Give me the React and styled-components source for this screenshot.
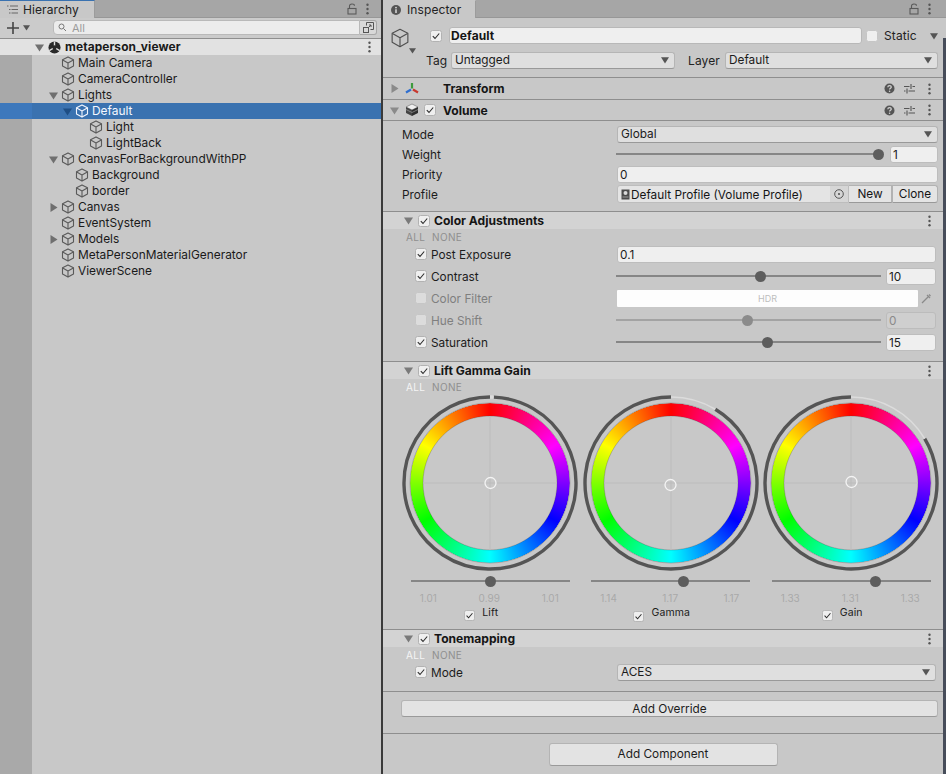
import React from "react";
import styled, { createGlobalStyle } from "styled-components";

const Global = createGlobalStyle`
  html, body { margin: 0; padding: 0; background: #c8c8c8; }
  body { font-family: Inter, "Liberation Sans", sans-serif; font-size: 11.8px; color: #151515; overflow: hidden; }
  * { box-sizing: border-box; }
`;

const Page = styled.div`
  width: 946px; height: 774px; display: flex; overflow: hidden; background: #c8c8c8;
`;
const HierarchyPanel = styled.section`
  width: 381px; height: 100%; display: flex; flex-direction: column; flex: none;
`;
const Divider = styled.div`
  width: 2px; flex: none; background: #3a3a3a;
`;
const InspectorPanel = styled.section`
  position: relative; flex: 1; min-width: 0; height: 100%; display: flex; flex-direction: column;
`;
const ScrollEdge = styled.div`
  position: absolute; right: 0; top: 38px; bottom: 0; width: 3px; background: #474d5a;
`;
const TabBar = styled.div`
  height: 18px; flex: none; background: #a6a6a6; display: flex; align-items: center; justify-content: space-between;
  border-bottom: 1px solid #979797;
`;
const Tab = styled.div`
  width: ${p => p.$width}px; height: 18px; margin-top: 1px; background: #c8c8c8; display: flex; align-items: center;
  padding-left: ${p => p.$pad}px; gap: ${p => p.$gap}px; font-size: 12px; color: #222; letter-spacing: .1px;
  border-top: 1px solid ${p => p.$accent ? "#3a72b0" : "#c8c8c8"};
  border-right: 1px solid #9c9c9c;
`;
const TabTools = styled.div`
  display: flex; align-items: center; gap: 9px; padding-right: ${p => p.$right}px; color: #555;
`;
const Toolbar = styled.div`
  height: 21px; flex: none; display: flex; align-items: center; background: #cbcbcb; border-bottom: 1px solid #8f8f8f; padding: 0 4px 1px 7px;
`;
const ToolbarAdd = styled.div`
  width: 46px; flex: none; display: flex; align-items: center; gap: 4px;
`;
const SearchField = styled.div`
  flex: 1; height: 15px; background: #ececec; border: 1px solid #b9b9b9; border-radius: 4px 0 0 4px; display: flex; align-items: center;
  padding-left: 4px; gap: 5px; color: #9b9b9b; font-size: 11px;
`;
const SearchButton = styled.div`
  width: 17px; height: 15px; background: #d8d8d8; border: 1px solid #a8a8a8; border-left: none; border-radius: 0 3px 3px 0;
  display: flex; align-items: center; justify-content: center;
`;
const Tree = styled.div`
  flex: 1; background: linear-gradient(90deg, #a9a9a9 32px, #c8c8c8 32px);
`;
const TreeRow = styled.div`
  height: 16px; display: flex; align-items: center; padding-left: ${p => 33 + p.$depth * 14}px;
  background: ${p => p.$selected ? "linear-gradient(90deg, #3d78bc 32px, #3a72b0 32px)" : p.$root ? "#e2e2e2" : "transparent"};
  color: ${p => p.$selected ? "#f4f8ff" : "#1a1a1a"};
  font-weight: ${p => p.$root ? 700 : 400};
  font-size: 11.9px;
  letter-spacing: ${p => p.$root ? "0.1px" : "0"};
`;
const ArrowSlot = styled.span`
  width: 14px; height: 16px; flex: none; display: flex; align-items: center; justify-content: center; padding-right: 2px;
`;
const RootMark = styled.span`
  display: flex; margin: 0 1px;
`;
const TreeLabel = styled.span`
  margin-left: 3px; padding-bottom: 2px; flex: 1; white-space: nowrap;
`;
const RowMenu = styled.span`
  display: flex; padding-right: 10px;
`;

const ObjectHeader = styled.div`
  height: 60px; flex: none; display: flex; border-bottom: 1px solid #8e8e8e; padding: 9px 8px 0 7px;
`;
const ObjectIcon = styled.div`
  width: 27px; flex: none; position: relative; height: 26px; margin-top: 1px;
`;
const ObjectMenuArrow = styled.span`
  position: absolute; right: 1px; bottom: 0; display: flex;
`;
const ObjectFields = styled.div`
  flex: 1; min-width: 0; display: flex; flex-direction: column; gap: 8px;
`;
const ObjectRow = styled.div`
  display: flex; align-items: center; height: 17px;
`;
const ObjectCheck = styled.span`
  display: flex; margin-left: 13px;
`;
const NameField = styled.div`
  flex: none; width: 413px; margin-left: 7px; height: 17px; background: #efefef; border: 1px solid #b8b8b8; border-radius: 3px;
  font-weight: 700; display: flex; align-items: center; padding-left: 1px; letter-spacing: .1px; font-size: 12px;
`;
const StaticGroup = styled.div`
  display: flex; align-items: center; margin-left: 4px; flex: 1; font-size: 12px; color: #222;
`;
const StaticText = styled.span`
  margin-left: 6px; flex: 1; letter-spacing: .1px;
`;
const InlineLabel = styled.span`
  width: ${p => p.$width}px; flex: none; margin-left: ${p => p.$left || 0}px; font-size: 12px; color: #222; letter-spacing: .1px;
`;
const Dropdown = styled.div`
  flex: ${p => p.$width ? `0 0 ${p.$width}px` : 1}; height: 17px; background: #dfdfdf; border: 1px solid #b5b5b5; border-bottom-color: #999;
  border-radius: 3px; display: flex; align-items: center; justify-content: space-between;
  padding: 0 5px ${p => p.$lift ? 2 : 0}px 3px; color: #1c1c1c;
`;

const ComponentHeader = styled.div`
  height: ${p => p.$height}px; flex: none; display: flex; align-items: center; border-bottom: 1px solid #8e8e8e; padding: 0 15px 0 7px;
  font-weight: 700; font-size: 12.1px;
`;
const HeaderIcon = styled.span`
  display: flex; margin-left: 6px; width: 14px; flex: none;
`;
const CheckSlot = styled.span`
  display: flex; width: 12px; margin: 0 7px 0 5px; flex: none;
`;
const HeaderLabel = styled.span`
  flex: 1;
`;
const HeaderTools = styled.span`
  display: flex; align-items: center; gap: 9px;
`;
const ToolMenu = styled.span`
  display: flex; margin-left: 4px;
`;

const VolumeBody = styled.div`
  height: 91px; flex: none; padding-top: 3px; border-bottom: 1px solid #8e8e8e;
`;
const PropRow = styled.div`
  height: ${p => p.$height}px; display: grid; grid-template-columns: 234px 1fr; align-items: center; padding-right: ${p => p.$right}px;
`;
const PropLabel = styled.div`
  display: flex; align-items: center; gap: 4px; padding-left: ${p => p.$left}px;
  color: ${p => p.$off ? "#7f7f7f" : "#1c1c1c"};
`;
const PropText = styled.span`
  padding-top: 2px;
`;
const ControlRow = styled.div`
  display: flex; align-items: center; min-width: 0; gap: ${p => p.$gap || 0}px;
`;
const TextField = styled.div`
  flex: ${p => p.$width ? `0 0 ${p.$width}px` : 1}; height: 17px; background: ${p => p.$off ? "#cfcfcf" : "#efefef"};
  border: 1px solid ${p => p.$off ? "#bcbcbc" : "#bdbdbd"}; border-radius: 3px; display: flex; align-items: center; padding: 1px 0 0 2px;
  color: ${p => p.$off ? "#8a8a8a" : "#1c1c1c"};
`;
const Track = styled.div`
  position: relative; flex: 1; height: 2px; margin-left: -1px; background: ${p => p.$off ? "#a3a3a3" : "#868686"};
`;
const Thumb = styled.span`
  position: absolute; top: 1px; width: 11px; height: 11px; margin: -5.5px 0 0 -5.5px; border-radius: 50%;
  background: ${p => p.$off ? "#8b8b8b" : "#5d5d5d"};
`;
const ObjectField = styled.div`
  flex: 1; height: 18px; background: #e4e4e4; border: 1px solid #bdbdbd; border-radius: 3px 0 0 3px; display: flex; align-items: center;
  gap: 1px; padding-left: 3px; overflow: hidden; white-space: nowrap;
`;
const ObjectName = styled.span`
  flex: 1; padding-top: 1px;
`;
const PickerCell = styled.span`
  width: 18px; height: 16px; flex: none; background: #d6d6d6; display: flex; align-items: center; justify-content: center;
`;
const MiniButton = styled.div`
  flex: 0 0 ${p => p.$width}px; height: 18px; background: #e4e4e4; border: 1px solid #b2b2b2; border-bottom-color: #999;
  border-left: ${p => p.$joined ? "1px solid #b2b2b2" : "none"};
  border-radius: ${p => p.$round ? "0 3px 3px 0" : "0"}; display: flex; align-items: center; justify-content: center; padding-bottom: 1px;
`;
const ColorField = styled.div`
  flex: 0 0 301px; height: 17px; background: #fdfdfd; color: #bdbdbd; font-size: 9px; display: flex; align-items: center; justify-content: center; border-radius: 1px;
`;
const PickerIcon = styled.span`
  flex: 1; display: flex; justify-content: flex-end; padding-right: 3px;
`;

const Section = styled.div`
  flex: none; border-bottom: 1px solid #8e8e8e; height: ${p => p.$height}px;
`;
const SectionHeader = styled.div`
  height: 17px; background: #d3d3d3; display: flex; align-items: center; padding: 0 15px 0 21px; font-weight: 700; font-size: 12.1px;
`;
const SectionCheck = styled.span`
  display: flex; margin: 0 4px 0 5px;
`;
const AllNone = styled.div`
  height: 14px; padding: 1px 0 0 23px; display: flex; gap: 7px; align-items: center; font-size: 10px; letter-spacing: .3px;
`;
const AllNoneWord = styled.span`
  color: ${p => p.$on ? "#f5f5f5" : "#8f8f8f"};
`;
const WheelGrid = styled.div`
  display: grid; grid-template-columns: repeat(3, 180.5px); padding: 2px 0 0 17px;
`;
const WheelColumn = styled.div`
  display: flex; flex-direction: column; align-items: center;
`;
const Wheel = styled.div`
  position: relative; width: 176px; height: 176px;
`;
const HueRing = styled.div`
  position: absolute; inset: 8px; border-radius: 50%;
  background: conic-gradient(#f00, #f0f 60deg, #00f 120deg, #0ff 180deg, #0f0 240deg, #ff0 300deg, #f00);
  -webkit-mask: radial-gradient(circle closest-side, transparent 66.6px, #000 67.4px, #000 79.4px, transparent 80px);
  mask: radial-gradient(circle closest-side, transparent 66.6px, #000 67.4px, #000 79.4px, transparent 80px);
`;
const WheelOverlay = styled.svg`
  position: absolute; inset: 0; width: 176px; height: 176px;
`;
const WheelSlider = styled.div`
  width: 159px; height: 20px; padding-left: 1px; display: flex; align-items: center;
`;
const WheelValues = styled.div`
  width: 159px; height: 14px; padding: 0 11px 0 9px; display: flex; justify-content: space-between; align-items: center;
  color: #a9a9a9; font-size: 10px;
`;
const WheelLabel = styled.div`
  width: 100%; display: grid; grid-template-columns: 1fr auto 1fr; gap: 7px; margin-top: 1px; align-items: start; font-size: 10.5px; color: #1c1c1c; letter-spacing: .1px;
`;
const WheelCheck = styled.span`
  justify-self: end; display: flex; margin-top: ${p => p.$drop}px;
`;
const OverrideBar = styled.div`
  flex: none; height: 42px; padding: 8px 8px 0 18px; border-bottom: 1px solid #8e8e8e;
`;
const WideButton = styled.div`
  height: ${p => p.$height}px; width: ${p => p.$width ? `${p.$width}px` : "100%"}; background: #e3e3e3; border: 1px solid #b4b4b4; border-bottom-color: #9a9a9a;
  border-radius: 3px; display: flex; align-items: center; justify-content: center; padding-bottom: ${p => p.$lift ? 1 : 0}px; color: #1c1c1c;
`;
const Footer = styled.div`
  flex: 1; display: flex; justify-content: center; padding: 9px 3px 0 0;
`;

const Tri = ({ dir = "down", color = "#6f6f6f", size = 9 }) => (
  <svg width={size} height={size} viewBox="0 0 9 9" style={{ flex: "none", display: "block" }}>
    <path d={dir === "down" ? "M0 1.5h9L4.5 8.5z" : "M1.5 0v9l7-4.5z"} fill={color} />
  </svg>
);
const Cube = ({ color = "#5a5a5a", size = 14, sw = 1.1 }) => (
  <svg width={size} height={size} viewBox="0 0 14 14" fill="none" stroke={color} strokeWidth={sw} strokeLinejoin="round" style={{ flex: "none", display: "block" }}>
    <path d="M7 .9l5.5 2.8v6.3L7 13.1 1.5 10V3.7z" />
    <path d="M1.7 3.9L7 6.9l5.3-3M7 6.9v6" />
  </svg>
);
const Dots = ({ color = "#555" }) => (
  <svg width="3" height="12" viewBox="0 0 3 12" style={{ display: "block" }}>
    <circle cx="1.5" cy="1.8" r="1.2" fill={color} /><circle cx="1.5" cy="6" r="1.2" fill={color} /><circle cx="1.5" cy="10.2" r="1.2" fill={color} />
  </svg>
);
const Lock = () => (
  <svg width="10" height="12" viewBox="0 0 10 12" fill="none" stroke="#5a5a5a" strokeWidth="1.1" style={{ display: "block" }}>
    <rect x="1" y="5.5" width="8" height="5.5" />
    <path d="M2.5 5.5V3.2C2.5 1.8 3.5 1 5 1s2.5.8 2.5 1.8" />
  </svg>
);
const Help = () => (
  <svg width="11" height="11" viewBox="0 0 11 11" style={{ display: "block" }}>
    <circle cx="5.5" cy="5.5" r="5" fill="#555" />
    <path d="M3.8 4.2c0-1 .8-1.6 1.8-1.6s1.7.6 1.7 1.4c0 1.2-1.7 1.2-1.7 2.4" fill="none" stroke="#d3d3d3" strokeWidth="1.2" />
    <circle cx="5.6" cy="8.3" r=".8" fill="#d3d3d3" />
  </svg>
);
const Sliders = () => (
  <svg width="11" height="11" viewBox="0 0 11 11" stroke="#555" strokeWidth="1.1" style={{ display: "block" }}>
    <path d="M0 3.5h5.5M8.5 3.5H11M7 1v5M0 8h1.5M4.5 8H11M3 5.5v5" fill="none" />
  </svg>
);
const Check = ({ on = true, size = 12, light = false }) => (
  <svg width={size} height={size} viewBox="0 0 12 12" style={{ flex: "none", display: "block" }}>
    <rect x=".5" y=".5" width="11" height="11" rx="2" fill={on || light ? "#efefef" : "#dcdcdc"} stroke={on ? "#b2b2b2" : "#c6c6c6"} />
    {on && <path d="M2.8 6.2l2.2 2.3 4.2-5" fill="none" stroke="#2c2c2c" strokeWidth="1.1" />}
  </svg>
);
const UnityMark = () => (
  <svg width="13" height="13" viewBox="0 0 14 14" style={{ flex: "none", display: "block" }}>
    <circle cx="7" cy="7" r="6.5" fill="#2a2a2a" />
    <path d="M7 7V.5M7 7l5.6 3.3M7 7l-5.6 3.3" stroke="#e2e2e2" strokeWidth="1.5" />
    <circle cx="7" cy="7" r="2.3" fill="#2a2a2a" />
  </svg>
);
const TransformIcon = () => (
  <svg width="14" height="14" viewBox="0 0 14 14" style={{ display: "block" }}>
    <path d="M7 6.5V1" stroke="#3d9a3d" strokeWidth="2.2" />
    <path d="M6 7.5L1 10.5" stroke="#2f6fd0" strokeWidth="2.2" />
    <path d="M8 7.5l5 3" stroke="#c8382f" strokeWidth="2.2" />
  </svg>
);
const VolumeIcon = () => (
  <svg width="14" height="14" viewBox="0 0 14 14" style={{ display: "block" }}>
    <path d="M7 1l6 3-6 3-6-3z" fill="#efefef" stroke="#666" strokeWidth=".6" />
    <path d="M1 4l6 3v6l-6-3z" fill="#444" />
    <path d="M13 4L7 7v6l6-3z" fill="#2f2f2f" />
    <path d="M1 6.5l6 3 6-3" fill="none" stroke="#aaa" strokeWidth=".6" />
  </svg>
);
const Profile = () => (
  <svg width="9" height="11" viewBox="0 0 9 11" style={{ flex: "none", display: "block" }}>
    <rect x=".5" y=".5" width="8" height="10" fill="#4c4c4c" />
    <circle cx="4.5" cy="4" r="2" fill="#dadada" />
    <rect x="1.5" y="7.5" width="6" height="1" fill="#999" />
  </svg>
);

const treeItems = [
  ["Main Camera", 1], ["CameraController", 1], ["Lights", 1, "down"], ["Default", 2, "down", true], ["Light", 3], ["LightBack", 3],
  ["CanvasForBackgroundWithPP", 1, "down"], ["Background", 2], ["border", 2], ["Canvas", 1, "right"], ["EventSystem", 1],
  ["Models", 1, "right"], ["MetaPersonMaterialGenerator", 1], ["ViewerScene", 1],
];

const adjustRows = [
  { label: "Post Exposure", kind: "text", value: "0.1" },
  { label: "Contrast", kind: "slider", value: "10", at: 54.5 },
  { label: "Color Filter", kind: "color", off: true },
  { label: "Hue Shift", kind: "slider", value: "0", at: 49.6, off: true },
  { label: "Saturation", kind: "slider", value: "15", at: 57.2 },
];

const wheels = [
  { label: "Lift", arc: 2.5, hx: 88.5, hy: 88, at: 50.3, vals: ["1.01", "0.99", "1.01"], drop: 4 },
  { label: "Gamma", arc: 31, hx: 87.5, hy: 90, at: 57.9, vals: ["1.14", "1.17", "1.17"], drop: 5 },
  { label: "Gain", arc: 59, hx: 88.5, hy: 87, at: 65.4, vals: ["1.33", "1.31", "1.33"], drop: 4 },
];

const polar = (deg, r = 86) => {
  const a = (deg * Math.PI) / 180;
  return [88 + r * Math.sin(a), 88 - r * Math.cos(a)];
};

const ColorWheel = ({ arc, hx, hy }) => {
  const [ax, ay] = polar(arc);
  return (
    <Wheel>
      <HueRing />
      <WheelOverlay viewBox="0 0 176 176" fill="none">
        <circle cx="88" cy="88" r="80" stroke="rgba(70,70,70,.35)" strokeWidth=".8" />
        <circle cx="88" cy="88" r="67" stroke="rgba(70,70,70,.35)" strokeWidth=".8" />
        <path d="M88 21v134M21 88h134" stroke="#bcbcbc" strokeWidth="1" />
        <path d={`M${ax} ${ay}A86 86 0 1 1 88 2`} stroke="#555" strokeWidth="3.4" />
        <path d={`M88 2A86 86 0 0 1 ${ax} ${ay}`} stroke="#dcdcdc" strokeWidth={arc < 5 ? 3.4 : 1.6} />
        <circle cx={hx} cy={hy} r="5.5" stroke="#f4f4f4" strokeWidth="1.3" />
      </WheelOverlay>
    </Wheel>
  );
};

const AllNoneRow = ({ on }) => (
  <AllNone><AllNoneWord $on={on}>ALL</AllNoneWord><AllNoneWord>NONE</AllNoneWord></AllNone>
);

const ComponentTools = () => (
  <HeaderTools><Help /><Sliders /><ToolMenu><Dots /></ToolMenu></HeaderTools>
);

export default function App() {
  return (
    <Page>
      <Global />
      <HierarchyPanel>
        <TabBar>
          <Tab $width={95} $pad={7} $gap={5} $accent>
            <svg width="11" height="9" viewBox="0 0 11 9" stroke="#666" strokeWidth="1" style={{ flex: "none" }}>
              <path d="M0 1h1.5M3 1h8M2 4.5h1.5M4.5 4.5H11M2 8h1.5M4.5 8H11" />
            </svg>
            Hierarchy
          </Tab>
          <TabTools $right={12}><Lock /><Dots /></TabTools>
        </TabBar>
        <Toolbar>
          <ToolbarAdd>
            <svg width="12" height="12" viewBox="0 0 12 12" stroke="#444" strokeWidth="1.6"><path d="M6 0v12M0 6h12" /></svg>
            <Tri size={7} color="#555" />
          </ToolbarAdd>
          <SearchField>
            <svg width="9" height="9" viewBox="0 0 9 9" fill="none" stroke="#777" style={{ flex: "none" }}><circle cx="3.5" cy="3.5" r="2.5" /><path d="M5.5 5.5L8 8" /></svg>
            All
          </SearchField>
          <SearchButton>
            <svg width="11" height="11" viewBox="0 0 11 11" fill="none" stroke="#555"><rect x=".5" y="5.5" width="5" height="5" /><path d="M3.5 3.5v-3h7v7h-3M5 6l3-3M6 3h2v2" /></svg>
          </SearchButton>
        </Toolbar>
        <Tree>
          <TreeRow $depth={0} $root>
            <ArrowSlot><Tri color="#707070" /></ArrowSlot>
            <RootMark><UnityMark /></RootMark>
            <TreeLabel>metaperson_viewer</TreeLabel>
            <RowMenu><Dots /></RowMenu>
          </TreeRow>
          {treeItems.map(([name, depth, arrow, selected]) => (
            <TreeRow key={name} $depth={depth} $selected={selected}>
              <ArrowSlot>{arrow && <Tri dir={arrow} color={selected ? "#1e4e85" : "#6f6f6f"} />}</ArrowSlot>
              <Cube color={selected ? "#f2f6ff" : "#5a5a5a"} />
              <TreeLabel>{name}</TreeLabel>
            </TreeRow>
          ))}
        </Tree>
      </HierarchyPanel>
      <Divider />
      <InspectorPanel>
        <TabBar>
          <Tab $width={93} $pad={8} $gap={6}>
            <svg width="10" height="10" viewBox="0 0 10 10" style={{ flex: "none" }}>
              <circle cx="5" cy="5" r="5" fill="#555" /><path d="M5 4.3v3.6" stroke="#ddd" strokeWidth="1.5" /><circle cx="5" cy="2.6" r=".9" fill="#ddd" />
            </svg>
            Inspector
          </Tab>
          <TabTools $right={15}><Lock /><Dots /></TabTools>
        </TabBar>
        <ObjectHeader>
          <ObjectIcon>
            <Cube size={20} sw={0.8} color="#4f4f4f" />
            <ObjectMenuArrow><Tri size={7} color="#555" /></ObjectMenuArrow>
          </ObjectIcon>
          <ObjectFields>
            <ObjectRow>
              <ObjectCheck><Check /></ObjectCheck>
              <NameField>Default</NameField>
              <StaticGroup>
                <Check on={false} light />
                <StaticText>Static</StaticText>
                <Tri size={8} color="#555" />
              </StaticGroup>
            </ObjectRow>
            <ObjectRow>
              <InlineLabel $width={25} $left={9}>Tag</InlineLabel>
              <Dropdown $width={224} $lift>Untagged<Tri size={8} color="#555" /></Dropdown>
              <InlineLabel $width={37} $left={13}>Layer</InlineLabel>
              <Dropdown $lift>Default<Tri size={8} color="#555" /></Dropdown>
            </ObjectRow>
          </ObjectFields>
        </ObjectHeader>

        <ComponentHeader $height={22}>
          <Tri dir="right" color="#8a8a8a" />
          <HeaderIcon><TransformIcon /></HeaderIcon>
          <CheckSlot />
          <HeaderLabel>Transform</HeaderLabel>
          <ComponentTools />
        </ComponentHeader>
        <ComponentHeader $height={21}>
          <Tri color="#8a8a8a" />
          <HeaderIcon><VolumeIcon /></HeaderIcon>
          <CheckSlot><Check /></CheckSlot>
          <HeaderLabel>Volume</HeaderLabel>
          <ComponentTools />
        </ComponentHeader>

        <VolumeBody>
          <PropRow $height={20} $right={8}>
            <PropLabel $left={19}><PropText>Mode</PropText></PropLabel>
            <Dropdown>Global<Tri size={8} color="#555" /></Dropdown>
          </PropRow>
          <PropRow $height={20} $right={8}>
            <PropLabel $left={19}><PropText>Weight</PropText></PropLabel>
            <ControlRow $gap={10}>
              <Track><Thumb style={{ left: "99.6%" }} /></Track>
              <TextField $width={48}>1</TextField>
            </ControlRow>
          </PropRow>
          <PropRow $height={20} $right={8}>
            <PropLabel $left={19}><PropText>Priority</PropText></PropLabel>
            <TextField>0</TextField>
          </PropRow>
          <PropRow $height={20} $right={8}>
            <PropLabel $left={19}><PropText>Profile</PropText></PropLabel>
            <ControlRow>
              <ObjectField>
                <Profile />
                <ObjectName>Default Profile (Volume Profile)</ObjectName>
                <PickerCell>
                  <svg width="10" height="10" viewBox="0 0 10 10" fill="none" stroke="#555"><circle cx="5" cy="5" r="4.3" /><circle cx="5" cy="5" r="1.1" fill="#555" stroke="none" /></svg>
                </PickerCell>
              </ObjectField>
              <MiniButton $width={43}>New</MiniButton>
              <MiniButton $width={46} $round $joined>Clone</MiniButton>
            </ControlRow>
          </PropRow>
        </VolumeBody>

        <Section $height={150}>
          <SectionHeader>
            <Tri color="#7a7a7a" /><SectionCheck><Check /></SectionCheck>
            <HeaderLabel>Color Adjustments</HeaderLabel><Dots />
          </SectionHeader>
          <AllNoneRow />
          {adjustRows.map(r => (
            <PropRow key={r.label} $height={22} $right={10}>
              <PropLabel $left={32} $off={r.off}><Check on={!r.off} /><PropText>{r.label}</PropText></PropLabel>
              {r.kind === "text" && <TextField>{r.value}</TextField>}
              {r.kind === "slider" && (
                <ControlRow $gap={5}>
                  <Track $off={r.off}><Thumb $off={r.off} style={{ left: `${r.at}%` }} /></Track>
                  <TextField $width={50} $off={r.off}>{r.value}</TextField>
                </ControlRow>
              )}
              {r.kind === "color" && (
                <ControlRow>
                  <ColorField>HDR</ColorField>
                  <PickerIcon>
                    <svg width="12" height="12" viewBox="0 0 12 12" fill="none" stroke="#8a8a8a" strokeWidth="1.3"><path d="M1 11l6-6M6 3l3 3M8 2.5l1.5 1.5" /></svg>
                  </PickerIcon>
                </ControlRow>
              )}
            </PropRow>
          ))}
        </Section>

        <Section $height={268}>
          <SectionHeader>
            <Tri color="#7a7a7a" /><SectionCheck><Check /></SectionCheck>
            <HeaderLabel>Lift Gamma Gain</HeaderLabel><Dots />
          </SectionHeader>
          <AllNoneRow on />
          <WheelGrid>
            {wheels.map(w => (
              <WheelColumn key={w.label}>
                <ColorWheel {...w} />
                <WheelSlider><Track><Thumb style={{ left: `${w.at}%` }} /></Track></WheelSlider>
                <WheelValues>{w.vals.map((v, i) => <span key={i}>{v}</span>)}</WheelValues>
                <WheelLabel>
                  <WheelCheck $drop={w.drop}><Check size={11} /></WheelCheck>
                  <span>{w.label}</span>
                </WheelLabel>
              </WheelColumn>
            ))}
          </WheelGrid>
        </Section>

        <Section $height={62}>
          <SectionHeader>
            <Tri color="#7a7a7a" /><SectionCheck><Check /></SectionCheck>
            <HeaderLabel>Tonemapping</HeaderLabel><Dots />
          </SectionHeader>
          <AllNoneRow on />
          <PropRow $height={22} $right={10}>
            <PropLabel $left={32}><Check /><PropText>Mode</PropText></PropLabel>
            <Dropdown>ACES<Tri size={8} color="#555" /></Dropdown>
          </PropRow>
        </Section>

        <OverrideBar><WideButton $height={17}>Add Override</WideButton></OverrideBar>
        <Footer><WideButton $height={23} $width={229} $lift>Add Component</WideButton></Footer>
        <ScrollEdge />
      </InspectorPanel>
    </Page>
  );
}
